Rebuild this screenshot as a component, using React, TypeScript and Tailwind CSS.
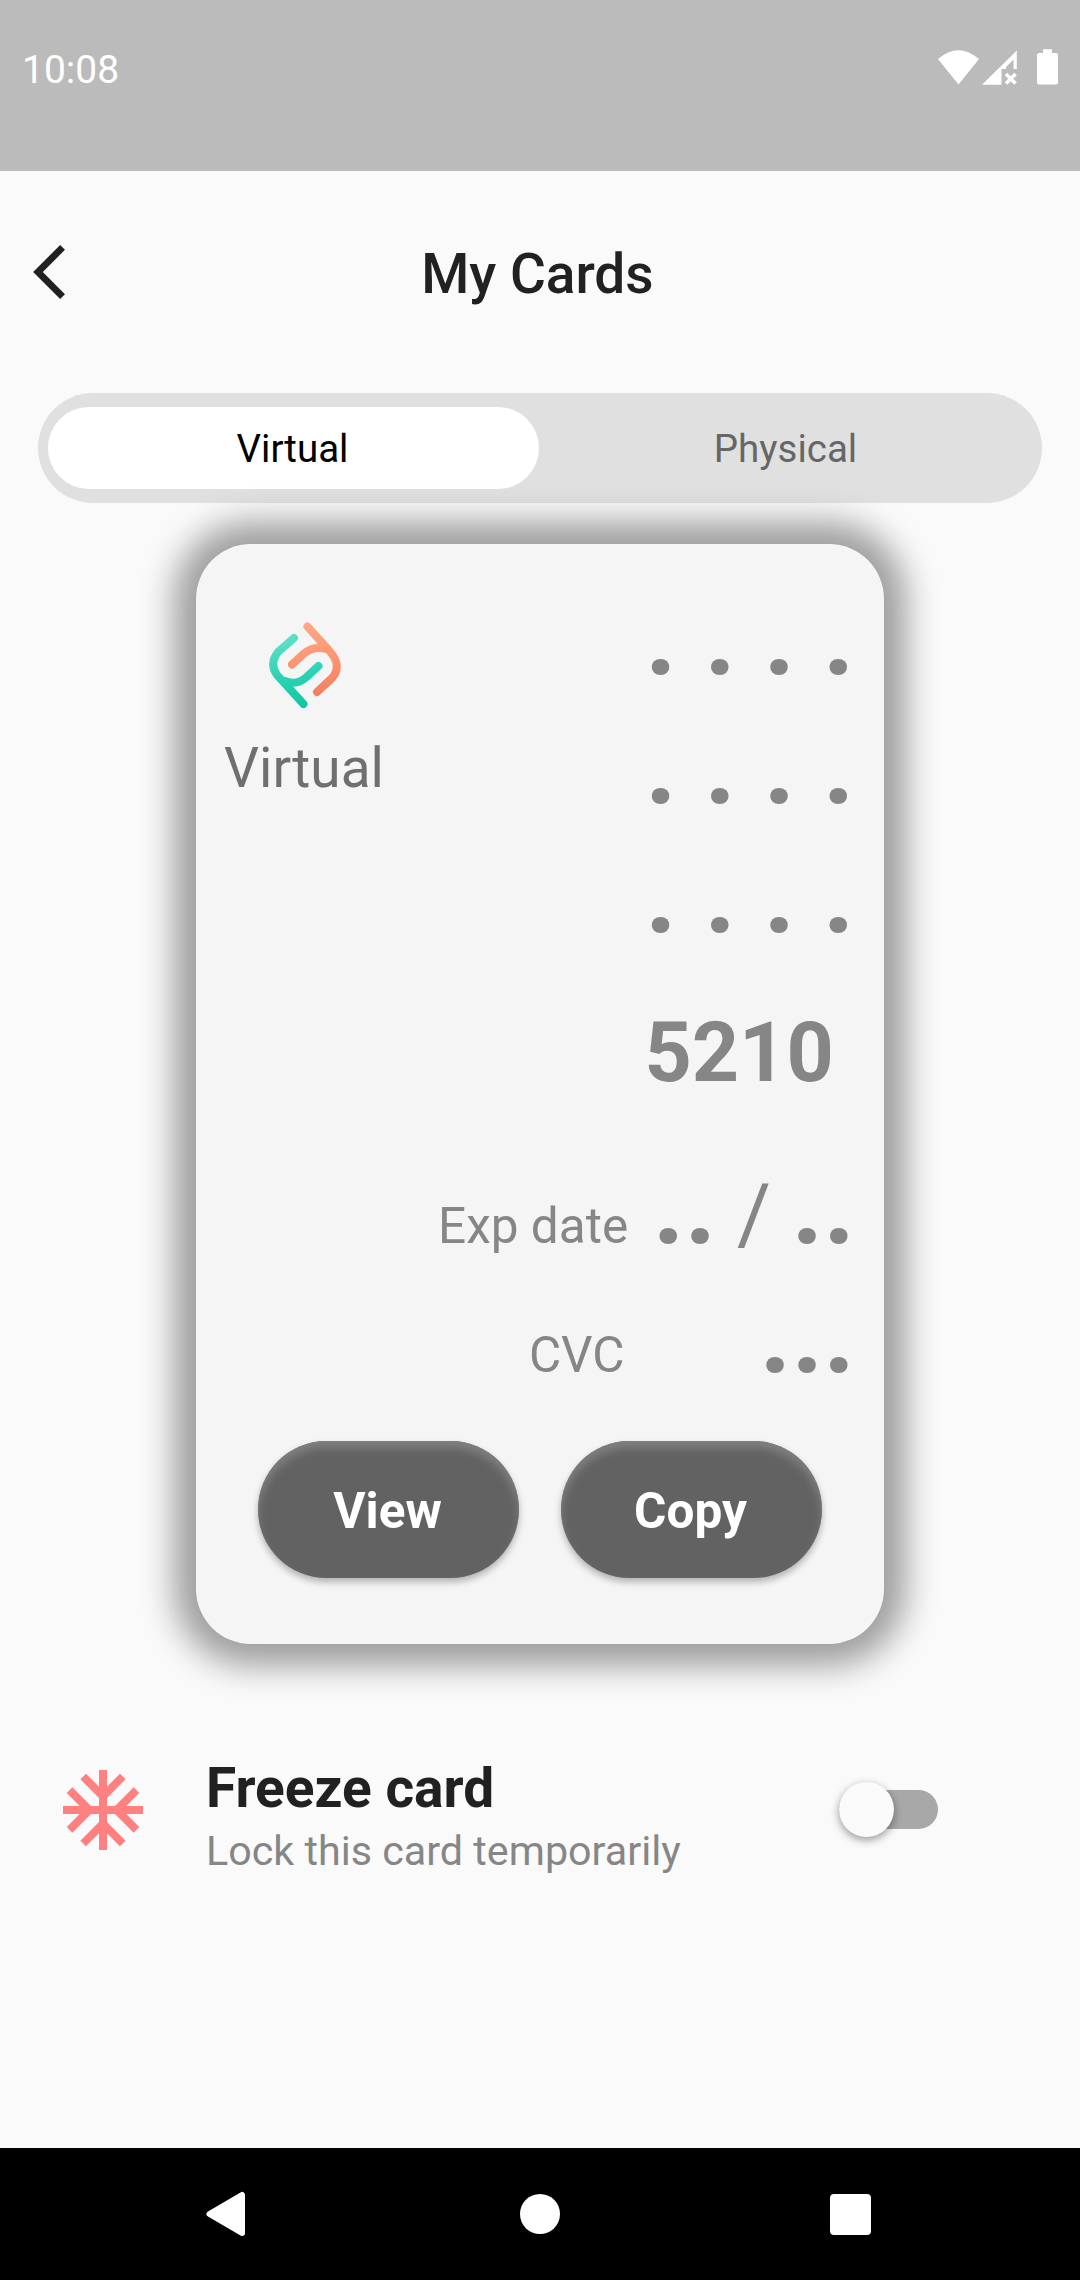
const dots = "mr-[0.700px] block text-right font-bold text-[110px] leading-[129px] h-[129px] text-[#868686] whitespace-pre";

function Logo() {
  return (
    <svg className="ml-[70px] h-[90px] w-[76px]" viewBox="267 620 76 90" fill="none" strokeLinecap="round" strokeLinejoin="round">
      <defs>
        <linearGradient id="teal" x1="295" y1="638" x2="306" y2="708" gradientUnits="userSpaceOnUse">
          <stop offset="0" stopColor="#5be0c6" />
          <stop offset="0.5" stopColor="#2fd3b4" />
          <stop offset="1" stopColor="#0cc79f" />
        </linearGradient>
        <linearGradient id="coral" x1="308" y1="624" x2="316" y2="694" gradientUnits="userSpaceOnUse">
          <stop offset="0" stopColor="#fda888" />
          <stop offset="0.5" stopColor="#fc9672" />
          <stop offset="1" stopColor="#f77f62" />
        </linearGradient>
      </defs>
      <g strokeWidth="8">
        <path stroke="url(#coral)" d="M307.500 626.5 L330 651.500 C339 662 338.500 671 332 678 L317 692" />
        <path stroke="url(#coral)" d="M292 664.500 L304 653.500 C311 647.500 320 647 326 649" />
        <path stroke="url(#teal)" d="M294 638 L278.500 651.500 C271.500 660 272 668 277 675 L303.500 704" />
        <path stroke="url(#teal)" d="M318.500 666 L306 677.500 C299 683.500 291 683.500 285 681" />
      </g>
    </svg>
  );
}

function PillButton({ label }: { label: string }) {
  return (
    <button className="flex h-[137px] w-[261px] items-center justify-center rounded-full bg-[#626262] pr-[2px] pt-[2px] text-[49.5px] font-bold text-white shadow-[inset_0_7px_8px_#808080,0_4px_7px_rgba(0,0,0,0.28)]">
      {label}
    </button>
  );
}

export default function App() {
  return (
    <div className="flex h-[2280px] w-[1080px] flex-col overflow-hidden bg-[#fafafa] font-[Roboto,sans-serif] text-[#212121]">
      <header className="flex h-[171px] items-start justify-between bg-[#bbbbbb] pl-[22px] pr-[21px] text-white">
        <span className="mt-[47px] text-[39px] leading-[46px]">10:08</span>
        <svg className="mt-[46px] h-[42px] w-[122px]" viewBox="937 46 122 42" fill="#fff">
          <path d="M938 59 Q958.500 41.500 979 59 L958.500 84.500 Z" />
          <path fillRule="evenodd" d="M982 84.800 L1016.800 50.500 V69 H1013.500 V59.500 L1006 67 V69 H1001.500 V84.800 Z" />
          <path d="M1006 74 L1015.500 83.500 M1015.500 74 L1006 83.500" stroke="#fff" strokeWidth="3.600" />
          <path d="M1043 49.200 h9 v3.800 h4 q2 0 2 2 v27.500 q0 2 -2 2 h-17 q-2 0 -2 -2 v-27.500 q0 -2 2 -2 h4 Z" />
        </svg>
      </header>

      <div className="flex h-[222px] items-start pl-[33.400px]">
        <svg className="mt-[74px] h-[54px] w-[32.100px]" viewBox="0 2.100 11.670 19.800" fill="#212121">
          <path d="M11.670 3.870L9.900 2.100 0 12l9.900 9.900 1.770-1.770L3.540 12z" />
        </svg>
        <h1 className="ml-[355.700px] mt-[71px] text-[55px] font-medium leading-[64px]">My Cards</h1>
      </div>

      <div className="ml-[38px] flex h-[110px] w-[1004px] items-center rounded-full bg-[#e0e0e0] px-[10px] text-[38.500px]">
        <div className="flex h-[82px] w-[491px] items-center justify-center rounded-full bg-white pr-[2px] pt-[2px] text-black">Virtual</div>
        <div className="flex h-[82px] flex-1 items-center justify-center pt-[2px] text-[#666666]">Physical</div>
      </div>

      <section className="relative ml-[196.250px] mt-[41.250px] flex h-[1100px] w-[687.500px] flex-col rounded-[55px] bg-[#f5f5f5] shadow-[0_0_33px_22px_#9e9e9e]">
        <div className="flex h-[597px] justify-between pl-[0.750px] pr-[28.500px] pt-[28px]">
          <div className="mt-[47.500px] flex flex-col">
            <Logo />
            <span className="ml-[27px] mt-[26.500px] text-[55px] leading-[64px] text-[#6f6f6f]">Virtual</span>
          </div>
          <div className="flex flex-col">
            <span className={dots}>. . . .</span>
            <span className={dots}>. . . .</span>
            <span className={dots}>. . . .</span>
            <span className="mr-[21.500px] mt-[29px] block text-right text-[82.500px] font-bold leading-[129px] text-[#868686]">5210</span>
          </div>
        </div>
        <div className="flex h-[129px] items-baseline justify-end pr-[28.500px] text-[#868686]">
          <span className="text-[49.500px]">Exp date</span>
          <span className="ml-[24.500px] text-[110px] font-bold leading-[129px]">..</span>
          <span className="whitespace-pre text-[82.500px]"> / </span>
          <span className="text-[110px] font-bold leading-[129px]">..</span>
        </div>
        <div className="flex h-[129px] items-baseline justify-end pr-[28.500px] text-[#868686]">
          <span className="text-[49.500px]">CVC</span>
          <span className="ml-[135px] text-[110px] font-bold leading-[129px]">...</span>
        </div>
        <div className="mt-[42px] flex justify-center gap-[42px]">
          <PillButton label="View" />
          <PillButton label="Copy" />
        </div>
      </section>

      <div className="mt-[110.250px] flex h-[130px] items-start">
        <svg className="ml-[63px] mt-[15px] h-[80px] w-[80px]" viewBox="2 2 20 20" fill="#ff8080">
          <path d="M22 11h-4.170l3.240-3.240-1.410-1.420L15 11h-2V9l4.660-4.660-1.420-1.410L13 6.170V2h-2v4.170L7.760 2.930 6.340 4.340 11 9v2H9L4.340 6.340 2.930 7.760 6.170 11H2v2h4.170l-3.240 3.240 1.410 1.420L9 13h2v2l-4.660 4.660 1.420 1.410L11 17.830V22h2v-4.170l3.240 3.240 1.420-1.410L13 15v-2h2l4.660 4.660 1.410-1.420L17.830 13H22z" />
        </svg>
        <div className="ml-[63px] mt-[1px] flex w-[633px] flex-col">
          <span className="text-[55px] font-bold leading-[64px]">Freeze card</span>
          <span className="mt-[1px] text-[41.250px] leading-[60px] text-[#868686]">Lock this card temporarily</span>
        </div>
        <div className="mt-[35px] flex h-[39px] w-[99px] items-center rounded-full bg-[#a8a8a8]">
          <div className="h-[55px] w-[55px] shrink-0 rounded-full bg-[#fafafa] shadow-[0_3px_9px_rgba(0,0,0,0.4)]" />
        </div>
      </div>

      <footer className="mt-auto flex h-[132px] items-center bg-black">
        <svg className="ml-[206px] h-[46px] w-[40px]" viewBox="0 0 40 46" fill="#fff" stroke="#fff" strokeWidth="6" strokeLinejoin="round">
          <path d="M3.500 23 L36 4 V42 Z" />
        </svg>
        <div className="ml-[274px] h-[40px] w-[40px] rounded-full bg-white" />
        <div className="ml-[270px] h-[41px] w-[41px] rounded-[4px] bg-white" />
      </footer>
    </div>
  );
}
